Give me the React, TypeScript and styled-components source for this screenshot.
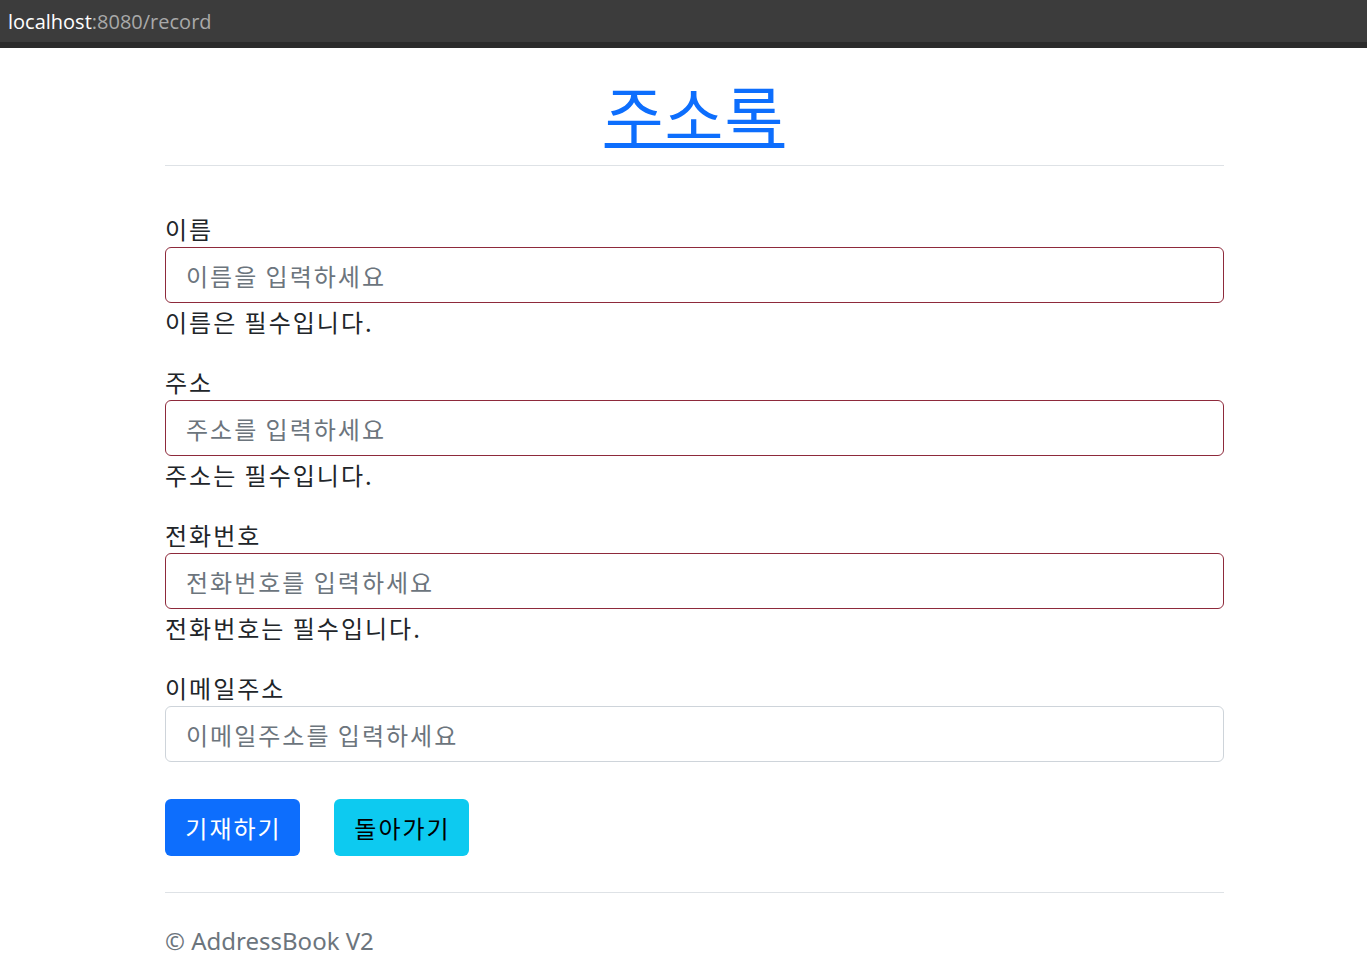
import React from 'react';
import styled, { createGlobalStyle } from 'styled-components';

const GlobalStyle = createGlobalStyle`
  html, body {
    margin: 0;
    padding: 0;
    background: #ffffff;
  }
  body {
    font-family: "Noto Sans", "Noto Sans CJK KR", sans-serif;
    color: #212529;
  }
`;

const AddressBar = styled.div`
  height: 42px;
  background: #3c3c3c;
  border-bottom: 6px solid #2b2b2b;
  display: flex;
  align-items: center;
  padding-left: 8px;
  font-family: "Open Sans", "Noto Sans", sans-serif;
  font-size: 20px;
`;

const Host = styled.span`
  color: #ffffff;
`;

const Path = styled.span`
  color: #a9a9a9;
`;

const Container = styled.main`
  width: 1059px;
  margin-left: 165px;
`;

const Header = styled.header`
  padding-top: 26px;
  padding-bottom: 14px;
  border-bottom: 1px solid #dee2e6;
  text-align: center;
  line-height: 0;
`;

const Title = styled.a`
  display: inline-block;
  font-family: "Noto Sans CJK KR", sans-serif;
  font-size: 64px;
  line-height: 77px;
  letter-spacing: 1px;
  color: #0d6efd;
  text-decoration: underline;
  text-decoration-thickness: 5px;
  text-underline-offset: 3px;
`;

const Form = styled.form`
  padding-top: 48px;
  display: flex;
  flex-direction: column;
`;

const Field = styled.div<{ $last?: boolean }>`
  display: flex;
  flex-direction: column;
  margin-bottom: ${({ $last }) => ($last ? '37px' : '31px')};
`;

const Label = styled.label`
  font-family: "Noto Sans CJK KR", sans-serif;
  font-size: 24px;
  line-height: 29px;
  letter-spacing: 2px;
  margin-bottom: 4px;
`;

const Input = styled.input<{ $invalid?: boolean }>`
  box-sizing: border-box;
  height: 56px;
  width: 100%;
  padding: 0 20px;
  border: 1px solid ${({ $invalid }) => ($invalid ? '#8e2a3b' : '#ced4da')};
  border-radius: 6px;
  font-family: "Noto Sans CJK KR", sans-serif;
  font-size: 24px;
  letter-spacing: 2px;
  color: #212529;
  outline: none;

  &::placeholder {
    color: #6c757d;
  }
`;

const Feedback = styled.div`
  font-family: "Noto Sans CJK KR", sans-serif;
  font-size: 24px;
  line-height: 29px;
  letter-spacing: 2px;
  margin-top: 4px;
  color: #212529;
`;

const Actions = styled.div`
  display: flex;
  gap: 34px;
  padding-bottom: 36px;
  border-bottom: 1px solid #dee2e6;
`;

const Button = styled.button<{ $variant: 'primary' | 'info' }>`
  box-sizing: border-box;
  height: 57px;
  width: 135px;
  padding: 0;
  border: none;
  border-radius: 6px;
  font-family: "Noto Sans CJK KR", sans-serif;
  font-size: 24px;
  letter-spacing: 2px;
  text-indent: 2px;
  background: ${({ $variant }) => ($variant === 'primary' ? '#0d6efd' : '#0dcaf0')};
  color: ${({ $variant }) => ($variant === 'primary' ? '#ffffff' : '#000000')};
  cursor: pointer;
`;

const Footer = styled.footer`
  padding-top: 33px;
  font-size: 24px;
  line-height: 29px;
  color: #6c757d;
`;

const fields = [
  { label: '이름', placeholder: '이름을 입력하세요', error: '이름은 필수입니다.' },
  { label: '주소', placeholder: '주소를 입력하세요', error: '주소는 필수입니다.' },
  { label: '전화번호', placeholder: '전화번호를 입력하세요', error: '전화번호는 필수입니다.' },
  { label: '이메일주소', placeholder: '이메일주소를 입력하세요' },
];

export default function App() {
  return (
    <>
      <GlobalStyle />
      <AddressBar>
        <Host>localhost</Host>
        <Path>:8080/record</Path>
      </AddressBar>
      <Container>
        <Header>
          <Title href="#">주소록</Title>
        </Header>
        <Form onSubmit={(e) => e.preventDefault()}>
          {fields.map((f, i) => (
            <Field key={f.label} $last={i === fields.length - 1}>
              <Label>{f.label}</Label>
              <Input placeholder={f.placeholder} $invalid={!!f.error} />
              {f.error && <Feedback>{f.error}</Feedback>}
            </Field>
          ))}
          <Actions>
            <Button type="submit" $variant="primary">기재하기</Button>
            <Button type="button" $variant="info">돌아가기</Button>
          </Actions>
        </Form>
        <Footer>© AddressBook V2</Footer>
      </Container>
    </>
  );
}
